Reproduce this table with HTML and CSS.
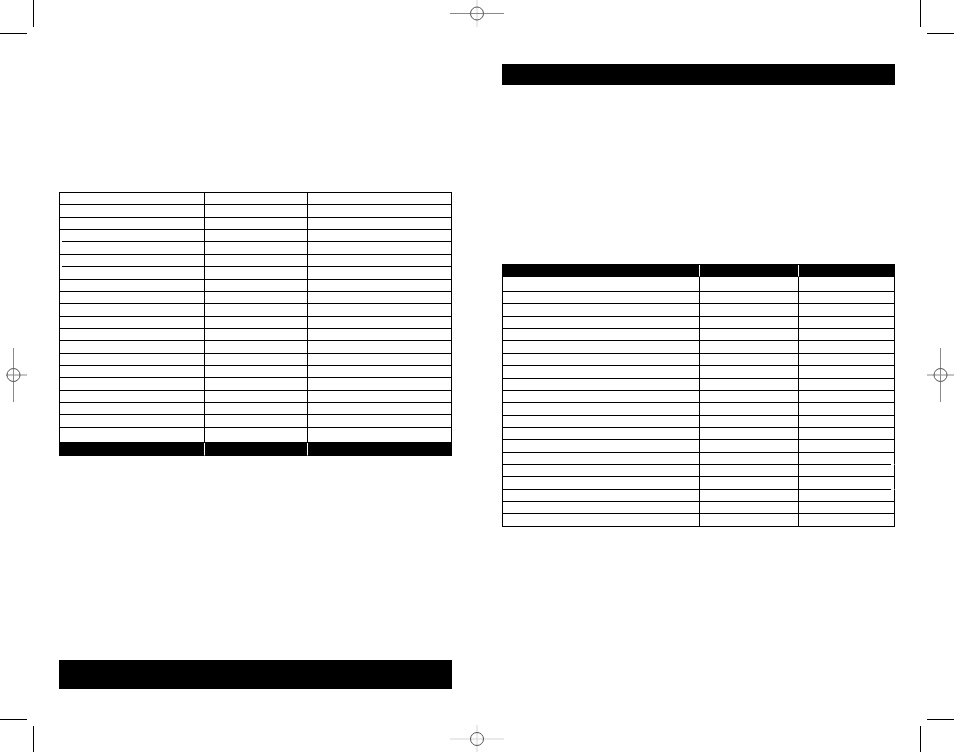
FILE: index.html
```html
<!DOCTYPE html>
<html lang="en">
<head>
<meta charset="utf-8">
<title>Print spread</title>
<link rel="stylesheet" href="styles.css">
</head>
<body>
<div class="sheet">
  <section class="page page-left">
    <div class="grid grid-left">
      <div class="c"></div><div class="c"></div><div class="c"></div>
      <div class="c"></div><div class="c"></div><div class="c"></div>
      <div class="c"></div><div class="c"></div><div class="c"></div>
      <div class="c gap-l"></div><div class="c"></div><div class="c"></div>
      <div class="c"></div><div class="c"></div><div class="c"></div>
      <div class="c gap-l"></div><div class="c"></div><div class="c"></div>
      <div class="c"></div><div class="c"></div><div class="c"></div>
      <div class="c"></div><div class="c"></div><div class="c"></div>
      <div class="c"></div><div class="c"></div><div class="c"></div>
      <div class="c"></div><div class="c"></div><div class="c"></div>
      <div class="c"></div><div class="c"></div><div class="c"></div>
      <div class="c"></div><div class="c"></div><div class="c"></div>
      <div class="c"></div><div class="c"></div><div class="c"></div>
      <div class="c"></div><div class="c"></div><div class="c"></div>
      <div class="c"></div><div class="c"></div><div class="c"></div>
      <div class="c"></div><div class="c"></div><div class="c"></div>
      <div class="c"></div><div class="c"></div><div class="c"></div>
      <div class="c"></div><div class="c"></div><div class="c"></div>
      <div class="c"></div><div class="c"></div><div class="c"></div>
      <div class="c"></div><div class="c"></div><div class="c"></div>
      <div class="c dark"></div><div class="c dark"></div><div class="c dark last"></div>
    </div>
    <div class="bar bar-bottom"></div>
  </section>

  <section class="page page-right">
    <div class="bar bar-top"></div>
    <div class="grid grid-right">
      <div class="c dark"></div><div class="c dark"></div><div class="c dark last"></div>
      <div class="c"></div><div class="c"></div><div class="c"></div>
      <div class="c"></div><div class="c"></div><div class="c"></div>
      <div class="c"></div><div class="c"></div><div class="c"></div>
      <div class="c"></div><div class="c"></div><div class="c"></div>
      <div class="c"></div><div class="c"></div><div class="c"></div>
      <div class="c"></div><div class="c"></div><div class="c"></div>
      <div class="c"></div><div class="c"></div><div class="c"></div>
      <div class="c"></div><div class="c"></div><div class="c"></div>
      <div class="c"></div><div class="c"></div><div class="c"></div>
      <div class="c"></div><div class="c"></div><div class="c"></div>
      <div class="c"></div><div class="c"></div><div class="c"></div>
      <div class="c"></div><div class="c"></div><div class="c"></div>
      <div class="c"></div><div class="c"></div><div class="c"></div>
      <div class="c"></div><div class="c"></div><div class="c"></div>
      <div class="c"></div><div class="c"></div><div class="c gap-r"></div>
      <div class="c"></div><div class="c"></div><div class="c"></div>
      <div class="c"></div><div class="c"></div><div class="c gap-r"></div>
      <div class="c"></div><div class="c"></div><div class="c"></div>
      <div class="c"></div><div class="c"></div><div class="c"></div>
      <div class="c"></div><div class="c"></div><div class="c"></div>
    </div>
  </section>

  <svg class="marks" width="954" height="752" viewBox="0 0 954 752" aria-hidden="true">
    <g class="crop">
      <line x1="33.5" y1="0" x2="33.5" y2="27"/>
      <line x1="0" y1="33.5" x2="27" y2="33.5"/>
      <line x1="920.5" y1="0" x2="920.5" y2="27"/>
      <line x1="927" y1="33.5" x2="954" y2="33.5"/>
      <line x1="0" y1="719.5" x2="27" y2="719.5"/>
      <line x1="33.5" y1="726" x2="33.5" y2="752"/>
      <line x1="927" y1="719.5" x2="954" y2="719.5"/>
      <line x1="920.5" y1="726" x2="920.5" y2="752"/>
    </g>
    <g class="reg">
      <line class="light" x1="477" y1="0" x2="477" y2="27"/>
      <line class="mid" x1="450" y1="13.5" x2="504" y2="13.5"/>
      <circle cx="477" cy="13.5" r="6.5"/>

      <line class="mid" x1="13.5" y1="348" x2="13.5" y2="402"/>
      <line class="mid" x1="6" y1="375" x2="27" y2="375"/>
      <circle cx="13.5" cy="375" r="6.5"/>

      <line class="mid" x1="940.5" y1="348" x2="940.5" y2="402"/>
      <line class="mid" x1="927" y1="375" x2="954" y2="375"/>
      <circle cx="940.5" cy="375" r="6.5"/>

      <line class="light" x1="450" y1="739" x2="504" y2="739"/>
      <line class="light" x1="477" y1="725" x2="477" y2="752"/>
      <circle cx="477" cy="739" r="6.5"/>
    </g>
  </svg>
</div>
</body>
</html>
```

FILE: styles.css
```css
html, body {
  margin: 0;
  padding: 0;
  background: #fff;
}

.sheet {
  position: relative;
  width: 954px;
  height: 752px;
  overflow: hidden;
  display: flex;
  align-items: flex-start;
  gap: 50px;
  padding-left: 59px;
  box-sizing: border-box;
  font-family: "Liberation Sans", Arial, sans-serif;
}

.page {
  width: 393px;
  display: flex;
  flex-direction: column;
}

.page-left {
  padding-top: 192px;
}

.page-right {
  padding-top: 64px;
}

.bar {
  background: #000;
  width: 393px;
}

.bar-top {
  height: 21px;
}

.bar-bottom {
  height: 29px;
  margin-top: 204px;
}

.grid {
  display: grid;
  border-top: 1px solid #000;
  border-left: 1px solid #000;
  width: 393px;
  box-sizing: border-box;
}

.grid-left {
  grid-template-columns: 145px 103px 144px;
  grid-template-rows: repeat(19, 12.37px) 15px 13px;
}

.grid-right {
  margin-top: 179px;
  grid-template-columns: 197px 99px 96px;
  grid-template-rows: 12px 15px repeat(19, 12.37px);
}

.c {
  position: relative;
  box-sizing: border-box;
  border-right: 1px solid #000;
  border-bottom: 1px solid #000;
}

.c.dark {
  background: #000;
  border-right-color: #fff;
}

.c.dark.last {
  border-right-color: #000;
}

/* row rules that stop short of the outer frame */
.c.gap-l {
  border-bottom-color: transparent;
}
.c.gap-l::after {
  content: "";
  position: absolute;
  left: 2px;
  right: -1px;
  bottom: -1px;
  height: 1px;
  background: #000;
}

.c.gap-r {
  border-bottom-color: transparent;
}
.c.gap-r::after {
  content: "";
  position: absolute;
  left: 0;
  right: 3px;
  bottom: -1px;
  height: 1px;
  background: #000;
}

.marks {
  position: absolute;
  top: 0;
  left: 0;
  pointer-events: none;
}

.crop line {
  stroke: #000;
  stroke-width: 1;
}

.reg line.mid {
  stroke: #8a8a8a;
  stroke-width: 1;
}

.reg line.light {
  stroke: #d4d4d4;
  stroke-width: 1;
}

.reg circle {
  fill: none;
  stroke: #555;
  stroke-width: 1;
}
```
